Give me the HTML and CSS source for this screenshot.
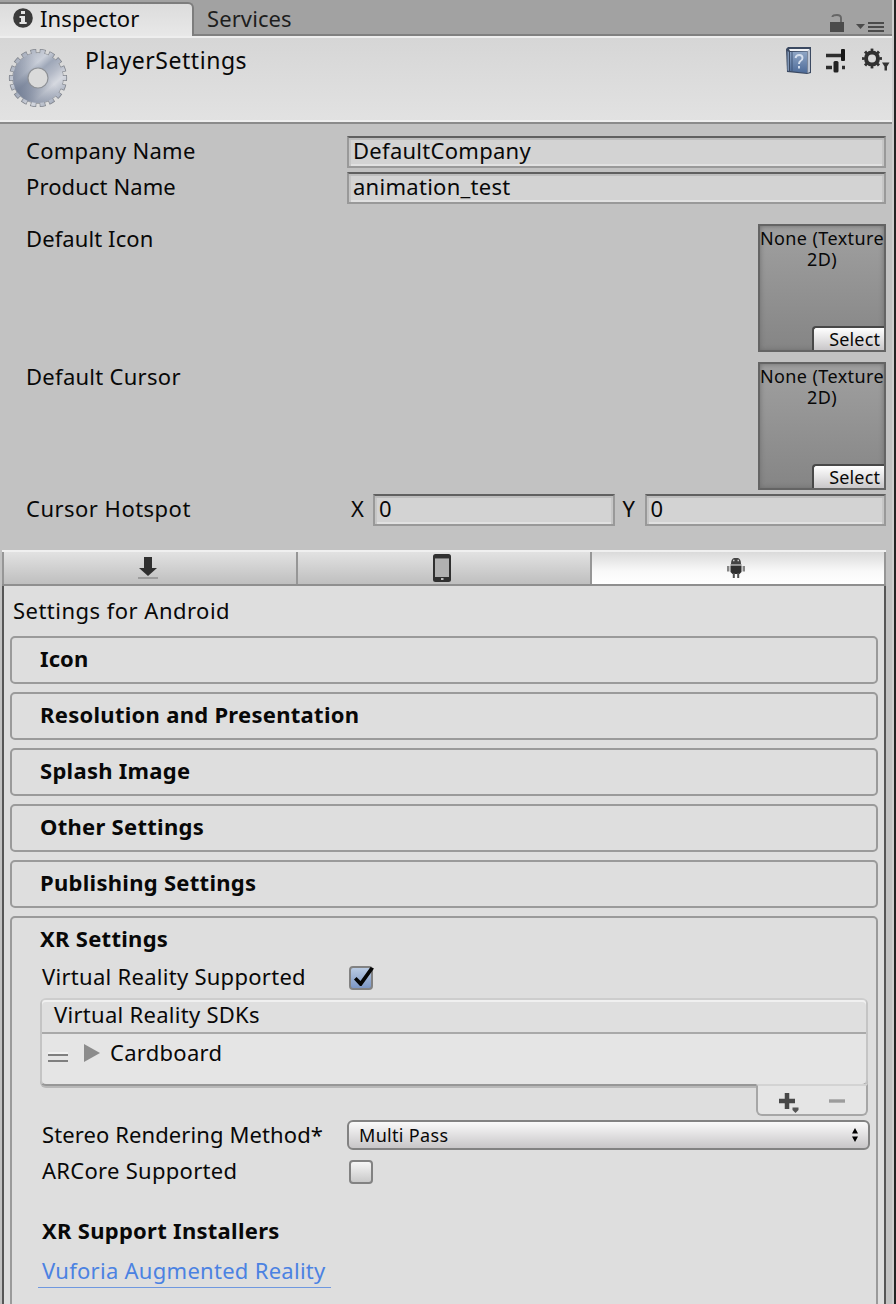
FILE: index.html
```html
<!DOCTYPE html>
<html lang="en">
<head>
<meta charset="utf-8">
<title>Inspector</title>
<link rel="stylesheet" href="styles.css">
</head>
<body>
<div class="window">
  <nav class="tabs">
    <div class="tab tab-active">
      <svg class="info" width="22" height="22" viewBox="0 0 22 22"><circle cx="11" cy="11" r="9.8" fill="#3b3b3b"/><path d="M9 4h4v3H9zM7.5 9H13v6h1.7v2H7.500v-2H9v-4H7.500z" fill="#e4e4e4"/></svg>
      <span class="tight">Inspector</span>
    </div>
    <div class="tab tab-idle tight">Services</div>
    <svg class="tab-tools" width="60" height="24" viewBox="0 0 60 24">
      <path d="M1 12h14v10H1z" fill="#4b4b4b"/><path d="M3.500 7V6.500Q4 5 8 5q4 0 4 3v4" fill="none" stroke="#666" stroke-width="1.900"/>
      <path d="M27 14h9l-4.500 5z" fill="#4b4b4b"/><path d="M39 13h16M39 17h16M39 21h16" stroke="#4b4b4b" stroke-width="2"/>
    </svg>
  </nav>

  <header class="head">
    <svg class="gear" width="60" height="60" viewBox="0 0 60 60">
      <defs><linearGradient id="steel" gradientUnits="userSpaceOnUse" x1="12" y1="8" x2="50" y2="52"><stop offset="0" stop-color="#a9b0be"/><stop offset=".28" stop-color="#cbd0da"/><stop offset=".42" stop-color="#9ea7b8"/><stop offset=".58" stop-color="#b4bac7"/><stop offset=".75" stop-color="#d6d9e0"/><stop offset="1" stop-color="#a3abbb"/></linearGradient>
      <linearGradient id="shade" gradientUnits="userSpaceOnUse" x1="8" y1="42" x2="36" y2="22"><stop offset="0" stop-color="#68748c" stop-opacity=".75"/><stop offset="1" stop-color="#68748c" stop-opacity="0"/></linearGradient></defs>
      <circle cx="30" cy="30" r="26.200" fill="none" stroke="#7f838b" stroke-width="5.800" pathLength="180" stroke-dasharray="6.200 3.800" stroke-dashoffset="3.100"/>
      <circle cx="30" cy="30" r="25.200" fill="none" stroke="#84888f" stroke-width="1"/>
      <circle cx="30" cy="30" r="25.900" fill="none" stroke="url(#steel)" stroke-width="4.800" pathLength="180" stroke-dasharray="4.800 5.200" stroke-dashoffset="2.400"/>
      <circle cx="30" cy="30" r="17.500" fill="none" stroke="url(#steel)" stroke-width="15"/>
      <circle cx="30" cy="30" r="17.500" fill="none" stroke="url(#shade)" stroke-width="15"/>
      <circle cx="30" cy="30" r="10" fill="#dadada" stroke="#8d9095" stroke-width="1.200"/>
    </svg>
    <h1 class="title">PlayerSettings</h1>
    <svg class="head-tools" width="106" height="32" viewBox="0 0 106 32">
      <defs><linearGradient id="book" x1="0" y1="0" x2="0" y2="1"><stop offset="0" stop-color="#90a7c6"/><stop offset="1" stop-color="#4d6b99"/></linearGradient></defs>
      <path d="M1 3l2-2h23v26l-4 1L2 26z" fill="#3b4961"/><path d="M4 3h20v2H5z" fill="#f0f2f5"/><path d="M22.500 5L25 3v23l-2.500 1z" fill="#bcc5d3"/><path d="M2.500 5L4 6v19l-1.500-.5z" fill="#7f95b5"/><path d="M5 6l17-.500V27L5 25z" fill="url(#book)"/><path d="M7 6v19" stroke="#405678" stroke-width="1"/>
      <path d="M10.500 12q.5-3 3.700-3 3.300 0 3.300 3 0 2-2 3-1.500 1-1.500 3M14 20v2.500" fill="none" stroke="#d5e0ef" stroke-width="1.900"/>
      <path d="M41 9.500h15M41 21.500h6M57 21.500h3" stroke="#2d2d2d" stroke-width="3.400"/><rect x="56" y="3" width="4" height="12" rx="1" fill="#161616"/><rect x="48.500" y="15" width="5" height="11.500" rx="1.500" fill="#222"/>
      <circle cx="87" cy="12.500" r="6" fill="none" stroke="#303030" stroke-width="4"/><circle cx="87" cy="12.500" r="8.700" fill="none" stroke="#303030" stroke-width="2.500" pathLength="80" stroke-dasharray="4 6" stroke-dashoffset="2"/>
      <path d="M97 16.500h7.500l-2.500 4v4h-2.500v-4z" fill="#333"/>
    </svg>
  </header>

  <main>
    <section class="fields">
      <div class="row"><label>Company Name</label><div class="input">DefaultCompany</div></div>
      <div class="row"><label class="tight">Product Name</label><div class="input">animation_test</div></div>
      <div class="row row-texture"><label class="tight">Default Icon</label><div class="texture"><span>None (Texture 2D)</span><button class="select">Select</button></div></div>
      <div class="row row-texture row-cursor"><label>Default Cursor</label><div class="texture"><span>None (Texture 2D)</span><button class="select">Select</button></div></div>
      <div class="row row-hotspot"><label class="wide">Cursor Hotspot</label><span class="axis">X</span><div class="input">0</div><span class="axis axis-y">Y</span><div class="input">0</div></div>
    </section>

    <section class="platform">
      <div class="platform-tabs">
        <div class="ptab"><svg width="24" height="28" viewBox="0 0 24 28"><path d="M8 3h8v11h5l-9 8-9-8h5z" fill="#303030"/><path d="M2 24h20" stroke="#939393" stroke-width="1.600"/></svg></div>
        <div class="ptab"><svg width="20" height="28" viewBox="0 0 20 28"><rect x="1" y="0" width="18" height="28" rx="2.500" fill="#303030"/><rect x="3" y="5" width="14" height="18" fill="#b1b1b1"/><path d="M3 4.500h14" stroke="#777"/><rect x="9" y="24" width="2.500" height="2" fill="#bbb"/></svg></div>
        <div class="ptab ptab-active"><svg width="20" height="24" viewBox="0 0 20 24"><path d="M5 8q0-5 3-6h4q3 1 3 6z" fill="#444"/><path d="M7 4.500h1.500M11.500 4.500H13" stroke="#ccc" stroke-width="1.500"/><path d="M4.500 9.500h11V16l-2 2h-7l-2-2z" fill="#303030"/><path d="M4.500 8.500h11" stroke="#999"/><path d="M2.200 10v5.500M17.800 10v5.500" stroke="#858585" stroke-width="2.400"/><path d="M7.800 17v5M12.200 17v5" stroke="#505050" stroke-width="2"/></svg></div>
      </div>
      <div class="platform-body">
        <p class="caption wide">Settings for Android</p>
        <div class="group"><h2 class="tight">Icon</h2></div>
        <div class="group"><h2>Resolution and Presentation</h2></div>
        <div class="group"><h2>Splash Image</h2></div>
        <div class="group"><h2>Other Settings</h2></div>
        <div class="group"><h2>Publishing Settings</h2></div>
        <div class="group group-open">
          <h2>XR Settings</h2>
          <div class="setting"><label>Virtual Reality Supported</label>
            <span class="check check-on"><svg width="28" height="28" viewBox="0 0 28 28"><path d="M5 15.500l2.500-2.500 4 4L21.500 3 25 4.500 12.500 22H11z" fill="#050505"/></svg></span></div>
          <div class="list">
            <div class="list-head">Virtual Reality SDKs</div>
            <div class="list-item"><i class="grip"></i><svg class="fold" width="18" height="18" viewBox="0 0 18 18"><path d="M1 0v18l16-9z" fill="#8c8c8c"/></svg><span>Cardboard</span></div>
          </div>
          <div class="list-foot">
            <svg width="112" height="32" viewBox="0 0 112 32"><path d="M23 17h16M31 9v16" stroke="#484848" stroke-width="4.500"/><path d="M36.500 23.500h6V26l-3 3-3-3z" fill="#555"/><path d="M73 17h16" stroke="#9c9c9c" stroke-width="3.400"/></svg>
          </div>
          <div class="setting setting-stereo"><label class="tight">Stereo Rendering Method*</label>
            <div class="dropdown">Multi Pass<svg width="8" height="16" viewBox="0 0 8 16"><path d="M4 1l3 5.500H1zM4 15L1 9.500h6z" fill="#000"/></svg></div></div>
          <div class="setting setting-arcore"><label>ARCore Supported</label><span class="check"></span></div>
          <h3>XR Support Installers</h3>
          <a class="link">Vuforia Augmented Reality</a>
        </div>
      </div>
    </section>
  </main>
</div>
</body>
</html>
```

FILE: styles.css
```css
* { box-sizing: border-box; }
body { margin: 0; width: 896px; height: 1304px; overflow: hidden; background: #242424; color: #080808; font: 22px/29px "Noto Sans", "Open Sans", sans-serif; letter-spacing: .28px; }
h1, h2, h3, p { margin: 0; font-size: inherit; }
svg { display: block; flex: none; }
.tight { letter-spacing: .1px; }
.wide { letter-spacing: .48px; }
.window { width: 894px; height: 1304px; overflow: hidden; background: #c2c2c2; border-right: 2px solid #cdcdcd; }

.tabs { height: 36px; display: flex; background: #a2a2a2; box-shadow: inset 0 -2px #808080; }
.tab { display: flex; line-height: 29px; }
.tab-active { width: 194px; height: 34px; margin-top: 2px; padding: 0 0 0 12px; gap: 6px; background: linear-gradient(#dcdcdc, #e8e8e8); border: solid #7d7d7d; border-width: 2px 2px 0 0; border-radius: 0 6px 0 0; }
.info { margin-top: 3px; }
.tab-idle { padding: 4px 0 0 13px; color: #1e1e1e; }
.tab-tools { margin: 10px 3px 0 auto; }

.head { display: flex; height: 88px; border-top: 2px solid #eee; border-bottom: 2px solid #8b8b8b; background: linear-gradient(#d6d6d6, #e2e2e2); box-shadow: inset 0 -2px #eee; }
.gear { margin: 10px 0 0 8px; }
.title { margin: 8px 0 0 17px; font-size: 23px; font-weight: 400; letter-spacing: .55px; }
.head-tools { margin: 8px 1px 0 auto; }

.fields { padding: 12px 6px 0 25px; height: 426px; }
.row { display: flex; height: 32px; margin-bottom: 4px; }
.row > label { width: 322px; padding-left: 1px; flex: none; }
.input { flex: 1; height: 32px; padding-left: 4px; line-height: 25px; background: #d3d3d3; border: 2px solid #999; border-top-color: #606060; box-shadow: inset 0 2px #bdbdbd, inset 2px 0 #c6c6c6, inset -2px 0 #c6c6c6, inset 0 -2px #e1e1e1; }
.row-texture { height: 128px; margin: 20px 0 10px; justify-content: space-between; }
.row-cursor { margin: 0 0 4px; }
.texture { width: 128px; border: 2px solid #646464; background: linear-gradient(#a0a0a0, #858585); box-shadow: inset 0 0 5px #6c6c6c; display: flex; flex-direction: column; justify-content: space-between; align-items: flex-end; font-size: 18px; line-height: 21px; letter-spacing: .4px; text-align: center; }
.texture span { margin: 2px -2px 0; width: 128px; }
.select { width: 72px; height: 24px; padding: 0 4px 0 0; text-align: right; font: 18px/22px "Noto Sans", sans-serif; letter-spacing: .11px; color: #080808; background: linear-gradient(#fff, #c9c7c9); border: solid #484848; border-width: 2px 0 0 2px; border-radius: 4px 0 0 0; }
.axis { width: 26px; padding-left: 4px; }
.axis-y { width: 30px; padding-left: 8px; }
.row-hotspot { margin: 0; }

.platform { margin: 0 6px 0 2px; border-top: 2px solid #f0f0f0; }
.platform-tabs { height: 34px; display: grid; grid-template-columns: 294px 294px 1fr; border-bottom: 2px solid #8f8f8f; border-right: 2px solid #969696; }
.ptab { display: flex; align-items: center; justify-content: center; padding-right: 4px; border-left: 2px solid #969696; background: linear-gradient(#e2e2e2, #bfbfbf); }
.ptab-active { background: linear-gradient(#dadada, #f9f9f9 60%, #fff); }
.platform-body { height: 730px; padding: 10px 6px 0; background: #dedede; border: solid #565656; border-width: 0 2px; }
.caption { padding-left: 3px; height: 40px; }
.group { height: 48px; margin-bottom: 8px; padding: 6px 0 0 27px; border: 2px solid #9a9a9a; border-radius: 5px; }
.group-open { height: 420px; padding-right: 8px; }
.group h2 { font-weight: 700; margin-left: 1px; }
.setting { display: flex; height: 36px; padding-left: 3px; margin-top: 9px; }
.setting label { width: 305px; }
.check { width: 24px; height: 24px; margin: 4px 0 0 2px; border: 2px solid #828282; border-radius: 4px; background: linear-gradient(#f6f6f6, #c9c9c9); }
.check-on { background: linear-gradient(#b9cbe3, #7c96c4); }
.check svg { margin: -4px 0 0 -2px; }
.list { margin-left: 1px; height: 88px; border: 2px solid #c0c0c0; border-color: #cdcdcd #c4c4c4 #979797 #c4c4c4; border-radius: 6px; background: #e5e5e5; box-shadow: 0 2px #b8b8b8; }
.list-head { height: 34px; padding-left: 12px; line-height: 29px; background: #dfdfdf; border-bottom: 2px solid #a9a9a9; box-shadow: inset 0 2px #f0f0f0; border-radius: 4px 4px 0 0; }
.list-item { display: flex; padding-top: 4px; }
.grip { width: 20px; height: 8px; margin: 16px 0 0 6px; border: solid #7f7f7f; border-width: 2px 0; box-shadow: 0 -2px #f1f1f1; }
.fold { margin: 6px 9px 0 15px; }
.list-foot { position: relative; z-index: 1; width: 112px; height: 32px; margin: -2px 0 0 auto; border: 2px solid #a6a6a6; border-top-color: #d3d3d3; border-radius: 0 0 6px 6px; background: #e5e5e5; }
.list-foot svg { margin: -2px; }
.setting-stereo { margin-top: 4px; }
.dropdown { flex: 1; height: 30px; margin: 0 -2px 0 -1px; padding: 0 9px 0 10px; display: flex; align-items: center; justify-content: space-between; font-size: 18px; letter-spacing: .32px; border: 2px solid #828282; border-radius: 6px; background: linear-gradient(#fafafa, #c8c6c8); }
.setting-stereo label { width: 306px; }
.setting-arcore { margin: 0; }
h3 { margin: 24px 0 0 3px; font-weight: 700; }
.link { display: block; width: 293px; height: 32px; margin: 11px 0 0 -1px; padding-left: 4px; color: #4b82e2; border-bottom: 1px solid #6f98df; white-space: nowrap; }
```
